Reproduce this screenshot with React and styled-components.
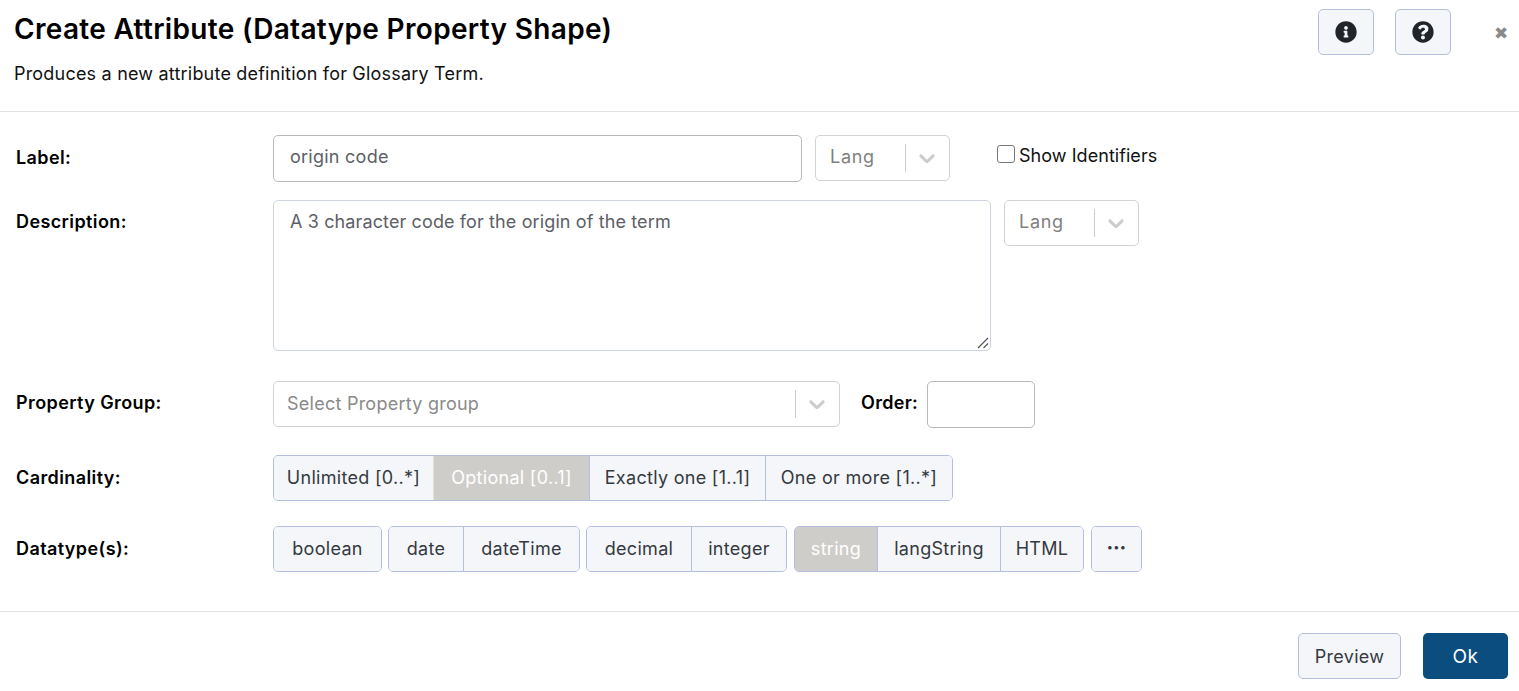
import styled, {createGlobalStyle} from 'styled-components';

const GlobalStyle = createGlobalStyle`
  html, body {
    margin: 0;
    background: #fff;
    color: #000;
    font-family: 'Inter', 'Liberation Sans', sans-serif;
  }
  * { box-sizing: border-box; }
`;

const cardinalities = [
  {text: 'Unlimited [0..*]', width: 159},
  {text: 'Optional [0..1]', width: 156, active: true},
  {text: 'Exactly one [1..1]', width: 176},
  {text: 'One or more [1..*]', width: 187},
];

const datatypeGroups = [
  [{text: 'boolean', width: 107}],
  [{text: 'date', width: 74}, {text: 'dateTime', width: 116}],
  [{text: 'decimal', width: 104}, {text: 'integer', width: 95}],
  [{text: 'string', width: 82, active: true}, {text: 'langString', width: 123}, {text: 'HTML', width: 83}],
  [{text: '•••', width: 49, small: true}],
];

function Chevron() {
  return (
    <ChevronIcon viewBox="0 0 20 20">
      <path d="M4.516 7.548c0.436-0.446 1.043-0.481 1.576 0l3.908 3.747 3.908-3.747c0.533-0.481 1.141-0.446 1.574 0 0.436 0.445 0.408 1.197 0 1.615-0.406 0.418-4.695 4.502-4.695 4.502-0.217 0.223-0.502 0.335-0.787 0.335s-0.57-0.112-0.789-0.335c0 0-4.287-4.084-4.695-4.502s-0.436-1.17 0-1.615z" />
    </ChevronIcon>
  );
}

function LangSelect() {
  return (
    <SelectBox $width={135}>
      <LangText>Lang</LangText>
      <SelectDivider />
      <Chevron />
    </SelectBox>
  );
}

export default function App() {
  return (
    <Modal>
      <GlobalStyle />
      <Header>
        <HeaderText>
          <Title>Create Attribute (Datatype Property Shape)</Title>
          <Subtitle>Produces a new attribute definition for Glossary Term.</Subtitle>
        </HeaderText>
        <HeaderActions>
          <IconButton aria-label="Info">
            <CircleIcon viewBox="0 0 512 512">
              <path d="M256 8C119 8 8 119 8 256s111 248 248 248 248-111 248-248S393 8 256 8zm0 110c23.200 0 42 18.800 42 42s-18.800 42-42 42-42-18.800-42-42 18.800-42 42-42zm56 254c0 6.600-5.400 12-12 12h-88c-6.600 0-12-5.400-12-12v-24c0-6.600 5.400-12 12-12h12v-64h-12c-6.600 0-12-5.400-12-12v-24c0-6.600 5.400-12 12-12h64c6.600 0 12 5.400 12 12v100h12c6.600 0 12 5.400 12 12v24z" />
            </CircleIcon>
          </IconButton>
          <IconButton aria-label="Help">
            <CircleIcon viewBox="0 0 512 512">
              <path d="M504 256c0 137-111 248-248 248S8 393 8 256 119 8 256 8s248 111 248 248zM262.700 90c-54.500 0-89.300 23-116.500 63.800-3.500 5.300-2.400 12.400 2.700 16.300l34.700 26.300c5.200 3.900 12.600 3 16.700-2.100 17.900-22.700 30.100-35.800 57.300-35.800 20.400 0 45.700 13.100 45.700 32.900 0 15-12.400 22.700-32.500 34-23.500 13.200-54.600 29.600-54.600 70.500V302c0 6.600 5.400 12 12 12h56c6.600 0 12-5.400 12-12v-1.300c0-28.400 82.900-29.600 82.900-106.400C397.300 136.500 337 90 262.700 90zM256 338c-25.300 0-45.800 20.500-45.800 45.800 0 25.300 20.500 45.800 45.800 45.800s45.800-20.500 45.800-45.800c0-25.300-20.500-45.800-45.800-45.800z" />
            </CircleIcon>
          </IconButton>
          <CloseButton aria-label="Close">✖</CloseButton>
        </HeaderActions>
      </Header>

      <Body>
        <LabelRow>
          <TopLabel $top={11}>Label:</TopLabel>
          <TextBox $width={529}>origin code</TextBox>
          <LangSelect />
          <IdentifierToggle>
            <CheckBox />
            Show Identifiers
          </IdentifierToggle>
        </LabelRow>

        <DescriptionRow>
          <TopLabel $top={10}>Description:</TopLabel>
          <TextArea>
            A 3 character code for the origin of the term
            <ResizeGrip viewBox="0 0 12 12">
              <path d="M1 11 L11 1 M6.500 11 L11 6.500" />
            </ResizeGrip>
          </TextArea>
          <LangSelect />
        </DescriptionRow>

        <GroupRow>
          <TopLabel $top={10}>Property Group:</TopLabel>
          <SelectBox $width={567}>
            <PlaceholderText>Select Property group</PlaceholderText>
            <SelectDivider />
            <Chevron />
          </SelectBox>
          <OrderLabel>Order:</OrderLabel>
          <TextBox $width={108} />
        </GroupRow>

        <CardinalityRow>
          <FieldLabel>Cardinality:</FieldLabel>
          <ButtonGroup>
            {cardinalities.map(item => (
              <GroupButton key={item.text} $width={item.width} $active={item.active}>
                {item.text}
              </GroupButton>
            ))}
          </ButtonGroup>
        </CardinalityRow>

        <DatatypeRow>
          <FieldLabel>Datatype(s):</FieldLabel>
          <GroupList>
            {datatypeGroups.map(group => (
              <ButtonGroup key={group[0].text}>
                {group.map(item => (
                  <GroupButton key={item.text} $width={item.width} $active={item.active} $small={item.small}>
                    {item.text}
                  </GroupButton>
                ))}
              </ButtonGroup>
            ))}
          </GroupList>
        </DatatypeRow>
      </Body>

      <Footer>
        <PreviewButton>Preview</PreviewButton>
        <OkButton>Ok</OkButton>
      </Footer>
    </Modal>
  );
}

const Modal = styled.div`
  width: 1519px;
  height: 691px;
  overflow: hidden;
  background: #fff;
`;

const Header = styled.header`
  display: flex;
  justify-content: space-between;
  height: 112px;
  padding: 9px 0 0 14px;
  border-bottom: 1px solid #e2e2e2;
`;

const HeaderText = styled.div`
  display: flex;
  flex-direction: column;
`;

const Title = styled.h1`
  margin: 3px 0 0;
  font-size: 28px;
  line-height: 34px;
  font-weight: 600;
  letter-spacing: 0.33px;
  color: #000;
`;

const Subtitle = styled.p`
  margin: 16px 0 0;
  font-size: 18px;
  line-height: 24px;
  letter-spacing: 0.2px;
  color: #111;
`;

const HeaderActions = styled.div`
  display: flex;
  align-items: flex-start;
`;

const IconButton = styled.button`
  display: flex;
  align-items: center;
  justify-content: center;
  width: 56px;
  height: 46px;
  margin-right: 21px;
  padding: 0;
  background: #f5f6fa;
  border: 1px solid #b3bfdd;
  border-radius: 5px;
`;

const CircleIcon = styled.svg`
  width: 22px;
  height: 22px;
  fill: #212529;
`;

const CloseButton = styled.button`
  width: 20px;
  height: 20px;
  margin: 14px 8px 0 19px;
  padding: 0;
  border: 0;
  background: none;
  color: #8a8a8a;
  font-size: 17px;
  line-height: 20px;
  font-family: 'DejaVu Sans', sans-serif;
`;

const Body = styled.main`
  height: 499px;
  padding: 23px 0 0 16px;
`;

const FormRow = styled.div`
  display: flex;
`;

const LabelRow = styled(FormRow)`
  align-items: flex-start;
`;

const DescriptionRow = styled(FormRow)`
  align-items: flex-start;
  margin-top: 18px;
`;

const GroupRow = styled(FormRow)`
  align-items: flex-start;
  margin-top: 30px;
`;

const CardinalityRow = styled(FormRow)`
  align-items: center;
  margin-top: 27px;
`;

const DatatypeRow = styled(FormRow)`
  align-items: center;
  margin-top: 25px;
`;

const FieldLabel = styled.label`
  width: 257px;
  flex: none;
  font-size: 18px;
  line-height: 24px;
  font-weight: 600;
  letter-spacing: 0.4px;
  color: #000;
`;

const TopLabel = styled(FieldLabel)`
  padding-top: ${p => p.$top}px;
`;

const TextBox = styled.div`
  width: ${p => p.$width}px;
  height: 47px;
  margin-right: 13px;
  padding: 0 16px;
  border: 1px solid #b8b8b8;
  border-radius: 5px;
  font-size: 18px;
  line-height: 42px;
  letter-spacing: 0.25px;
  color: #5c6066;
`;

const TextArea = styled.div`
  position: relative;
  width: 718px;
  height: 151px;
  margin-right: 13px;
  padding: 9px 16px;
  border: 1px solid #ced4e0;
  border-radius: 5px;
  font-size: 18px;
  line-height: 24px;
  letter-spacing: 0.12px;
  color: #5c6066;
`;

const ResizeGrip = styled.svg`
  position: absolute;
  right: 1px;
  bottom: 1px;
  width: 12px;
  height: 12px;
  stroke: #555;
  stroke-width: 1.2;
`;

const SelectBox = styled.div`
  display: flex;
  align-items: center;
  width: ${p => p.$width}px;
  height: 46px;
  padding-right: 9px;
  border: 1px solid #d2d2d2;
  border-radius: 5px;
  background: #fff;
`;

const LangText = styled.span`
  flex: 1;
  padding: 0 0 4px 14px;
  font-size: 18px;
  letter-spacing: 0.7px;
  color: #808080;
`;

const PlaceholderText = styled(LangText)`
  padding: 0 0 2px 13px;
  letter-spacing: 0.25px;
  color: #8a8a8a;
`;

const SelectDivider = styled.span`
  width: 1px;
  height: 28px;
  margin-right: 8px;
  background: #cccccc;
`;

const ChevronIcon = styled.svg`
  width: 26px;
  height: 26px;
  fill: #cccccc;
`;

const IdentifierToggle = styled.label`
  display: flex;
  align-items: center;
  margin: 9px 0 0 47px;
  font-size: 18px;
  line-height: 24px;
  letter-spacing: 0.05px;
  color: #111;
`;

const CheckBox = styled.span`
  width: 18px;
  height: 18px;
  margin: -5px 4px 0 0;
  border: 1px solid #767676;
  border-radius: 3px;
  background: #fff;
`;

const OrderLabel = styled.span`
  width: 66px;
  margin-left: 21px;
  font-size: 18px;
  line-height: 44px;
  font-weight: 600;
  letter-spacing: 0.3px;
  color: #000;
`;

const ButtonGroup = styled.div`
  display: flex;
  height: 46px;
  border: 1px solid #b3bfdd;
  border-radius: 5px;
  background: #f5f6fa;
  overflow: hidden;
`;

const GroupList = styled.div`
  display: flex;
  gap: 6px;
  ${ButtonGroup}:nth-child(n+4) {
    margin-left: 1px;
  }
`;

const GroupButton = styled.button`
  width: ${p => p.$width}px;
  padding: 0 0 ${p => (p.$small ? '5px' : '2px')};
  border: 0;
  border-left: 1px solid ${p => (p.$active ? '#e2dfd6' : '#b3bfdd')};
  background: ${p => (p.$active ? '#cfcdca' : '#f5f6fa')};
  color: ${p => (p.$active ? '#fff' : '#343a40')};
  font-family: inherit;
  font-size: ${p => (p.$small ? '11px' : '18px')};
  letter-spacing: 0.3px;
  &:first-child {
    border-left: 0;
  }
`;

const Footer = styled.footer`
  display: flex;
  justify-content: flex-end;
  gap: 22px;
  height: 80px;
  padding: 21px 11px 0 0;
  border-top: 1px solid #e2e2e2;
`;

const PreviewButton = styled.button`
  width: 103px;
  height: 46px;
  padding: 0;
  border: 1px solid #b3bfdd;
  border-radius: 5px;
  background: #f5f6fa;
  color: #343a40;
  font-family: inherit;
  font-size: 18px;
  letter-spacing: 0.3px;
`;

const OkButton = styled.button`
  width: 85px;
  height: 46px;
  padding: 0;
  border: 0;
  border-radius: 5px;
  background: #0a4d7e;
  color: #fff;
  font-family: inherit;
  font-size: 19px;
  letter-spacing: 0.5px;
`;
